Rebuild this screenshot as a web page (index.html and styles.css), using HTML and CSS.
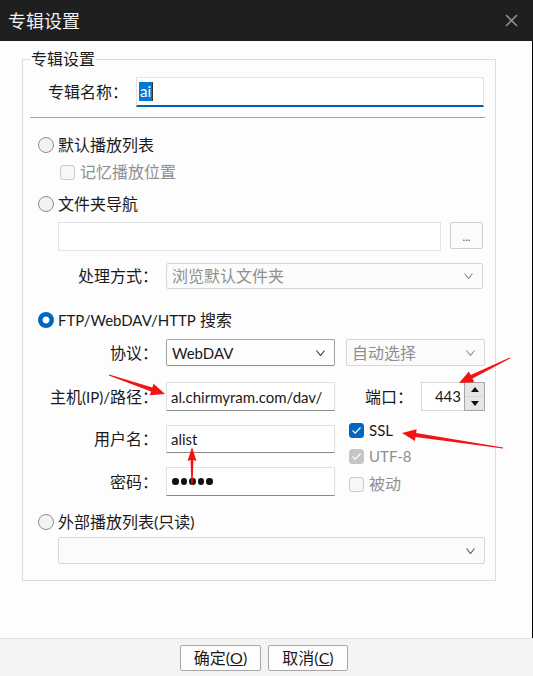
FILE: index.html
```html
<!DOCTYPE html>
<html lang="zh-CN">
<head>
<meta charset="utf-8">
<title>专辑设置</title>
<link rel="stylesheet" href="styles.css">
</head>
<body>
<div class="titlebar">
  <span class="title">专辑设置</span>
  <svg class="close" width="13" height="13" viewBox="0 0 13 13"><path d="M1 1L12 12M12 1L1 12" stroke="#8a8a8a" stroke-width="1.7" fill="none"/></svg>
</div>
<div class="main">
  <fieldset class="group">
    <legend>专辑设置</legend>

    <div class="name-row">
      <span class="lbl">专辑名称：</span>
      <div class="name-input"><span class="sel lt">ai</span><span class="caret"></span></div>
    </div>
    <div class="sep"></div>

    <div class="radio-row r1"><span class="radio"></span><span>默认播放列表</span></div>
    <div class="check-row c1 disabled"><span class="check"></span><span>记忆播放位置</span></div>

    <div class="radio-row r2"><span class="radio"></span><span>文件夹导航</span></div>
    <div class="path-row">
      <div class="path-input"></div>
      <div class="browse">...</div>
    </div>
    <div class="frow proc-row">
      <span class="lab">处理方式：</span>
      <div class="select dis w-proc"><span>浏览默认文件夹</span><svg class="chev" width="9" height="6" viewBox="0 0 9 6"><path d="M0.5 0.5L4.5 5.5L8.5 0.5" stroke="#8a8a8a" stroke-width="1.1" fill="none"/></svg></div>
    </div>

    <div class="radio-row r3"><span class="radio on"></span><span><span class="lt">FTP/WebDAV/HTTP</span> 搜索</span></div>
    <div class="frow proto-row">
      <span class="lab">协议：</span>
      <div class="select act w-proto"><span class="lt">WebDAV</span><svg class="chev" width="9" height="6" viewBox="0 0 9 6"><path d="M0.5 0.5L4.5 5.5L8.5 0.5" stroke="#333" stroke-width="1.1" fill="none"/></svg></div>
      <div class="select dis w-auto"><span>自动选择</span><svg class="chev" width="9" height="6" viewBox="0 0 9 6"><path d="M0.5 0.5L4.5 5.5L8.5 0.5" stroke="#8a8a8a" stroke-width="1.1" fill="none"/></svg></div>
    </div>
    <div class="frow host-row">
      <span class="lab">主机<span class="lt">(IP)/</span>路径：</span>
      <div class="tinput h29 lt">al.chirmyram.com/dav/</div>
      <span class="port-lab">端口：</span>
      <div class="spin">
        <div class="spin-input lt">443</div>
        <div class="spin-btns">
          <div class="sbtn"><svg width="8" height="5" viewBox="0 0 8 5"><path d="M0 5L4 0L8 5Z" fill="#111"/></svg></div>
          <div class="sbtn"><svg width="8" height="5" viewBox="0 0 8 5"><path d="M0 0L4 5L8 0Z" fill="#111"/></svg></div>
        </div>
      </div>
    </div>
    <div class="cred">
      <div class="cred-left">
        <div class="frow user-row">
          <span class="lab">用户名：</span>
          <div class="tinput h28 lt">alist</div>
        </div>
        <div class="frow pwd-row">
          <span class="lab">密码：</span>
          <div class="tinput h29 pwd"><i></i><i></i><i></i><i></i><i></i></div>
        </div>
      </div>
      <div class="cred-right">
        <div class="check-row ssl"><span class="check on"><svg width="11" height="9" viewBox="0 0 11 9"><path d="M1.5 4.5L4.2 7.2L9.5 1.5" stroke="#fff" stroke-width="1.2" fill="none"/></svg></span><span class="lt">SSL</span></div>
        <div class="check-row utf disabled"><span class="check on-dis"><svg width="11" height="9" viewBox="0 0 11 9"><path d="M1.5 4.5L4.2 7.2L9.5 1.5" stroke="#fff" stroke-width="1.2" fill="none"/></svg></span><span class="lt">UTF-8</span></div>
        <div class="check-row pasv disabled"><span class="check"></span><span>被动</span></div>
      </div>
    </div>

    <div class="radio-row r4"><span class="radio"></span><span>外部播放列表(只读)</span></div>
    <div class="select dis ext"><span></span><svg class="chev" width="9" height="6" viewBox="0 0 9 6"><path d="M0.5 0.5L4.5 5.5L8.5 0.5" stroke="#555" stroke-width="1.1" fill="none"/></svg></div>
  </fieldset>
</div>
<div class="footer">
  <button class="btn b-ok">确定(<u>O</u>)</button>
  <button class="btn b-cancel">取消(<u>C</u>)</button>
</div>

<svg class="arrows" width="533" height="676" viewBox="0 0 533 676">
  <polygon fill="#f21414" points="109.2,374.5 152.3,387.6 153.6,383.8 165,394 149.8,395.2 151.1,391.4 108.8,375.5"/>
  <polygon fill="#f21414" points="509.8,357.6 470.7,375.0 468.9,371.4 459,383 474.2,382.2 472.5,378.6 510.2,358.4"/>
  <polygon fill="#f21414" points="503.1,447.4 416.1,433.1 416.7,429.2 402,433 414.9,441.0 415.5,437.1 502.9,448.6"/>
  <polygon fill="#f21414" points="192,447 196.5,461 193.4,460 192.6,485 191.4,485 190.6,460 187.5,461"/>
</svg>
</body>
</html>
```

FILE: styles.css
```css
* { box-sizing: border-box; }
html, body { margin: 0; padding: 0; }
body {
  width: 533px;
  height: 676px;
  overflow: hidden;
  position: relative;
  background: #fdfdfd;
  font-family: "Lato", "Noto Sans CJK SC", sans-serif;
  font-size: 16px;
  line-height: 20px;
  color: #1a1a1a;
}
.lt { font-size: 15px; }

.titlebar {
  height: 41px;
  background: #1f1f1f;
  display: flex;
  align-items: center;
  justify-content: space-between;
  padding: 0 15px 0 8px;
}
.title { color: #f2f2f2; font-size: 18px; line-height: 24px; }

.main {
  height: 597px;
  padding: 8px 0 0 22px;
  border-right: 1px solid #000;
}
.group {
  width: 474px;
  margin: 0;
  padding: 0 0 16px 0;
  border: 1px solid #dcdcdc;
  min-inline-size: 0;
}
.group legend {
  margin-left: 7px;
  padding: 0 1px;
  font-size: 16px;
  line-height: 20px;
}

.name-row {
  display: flex;
  align-items: center;
  gap: 8px;
  margin-top: 8px;
  padding-left: 25px;
}
.lbl { white-space: nowrap; }
.name-input {
  width: 348px;
  height: 30px;
  background: #fff;
  border: 1px solid #e3e3e3;
  border-bottom: 2px solid #005fb8;
  padding-left: 2px;
  display: flex;
  align-items: center;
}
.sel { background: #0078d7; color: #fff; line-height: 19px; padding: 0 1px; }
.caret { width: 1px; height: 19px; background: #333; }

.sep {
  margin: 10px 0 0 7px;
  width: 455px;
  height: 1px;
  background: #a3a3a3;
}

.radio-row {
  display: flex;
  align-items: center;
  gap: 4px;
  height: 20px;
  padding-left: 15px;
}
.r1 { margin-top: 17px; }
.r2 { margin-top: 12px; }
.r3 { margin-top: 21px; }
.r4 { margin-top: 16px; }
.radio {
  flex: none;
  width: 16px;
  height: 16px;
  border-radius: 50%;
  border: 1px solid #8d8d8d;
  background: #f2f2f2;
}
.radio.on {
  border: none;
  background: radial-gradient(circle, #fff 0 3.2px, #0067c0 3.8px);
}

.check-row {
  display: flex;
  align-items: center;
  gap: 5px;
  height: 20px;
}
.c1 { margin-top: 7px; padding-left: 37px; }
.check {
  flex: none;
  width: 15px;
  height: 15px;
  border-radius: 3px;
  border: 1px solid #cacaca;
  background: #f7f7f7;
  display: flex;
  align-items: center;
  justify-content: center;
}
.check.on { background: #0067c0; border-color: #0067c0; }
.check.on-dis { background: #c6c6c6; border-color: #c6c6c6; }
.disabled { color: #8f8f8f; }

.path-row {
  display: flex;
  align-items: flex-start;
  gap: 9px;
  margin: 8px 0 0 35px;
}
.path-input {
  width: 383px;
  height: 29px;
  background: #fff;
  border: 1px solid #e3e3e3;
}
.browse {
  width: 33px;
  height: 27px;
  border: 1px solid #cfcfcf;
  border-radius: 2px;
  background: #fbfbfb;
  color: #555;
  font-size: 11px;
  line-height: 11px;
  display: flex;
  align-items: flex-end;
  justify-content: center;
  padding-bottom: 6px;
}

.frow { display: flex; align-items: center; }
.lab {
  flex: none;
  width: 135px;
  margin-right: 8px;
  text-align: right;
  white-space: nowrap;
}
.proc-row { margin-top: 12px; }
.proto-row { margin-top: 9px; }
.host-row { margin-top: 16px; }

.select {
  height: 26px;
  display: flex;
  align-items: center;
  justify-content: space-between;
  padding: 0 9px 0 5px;
  border-radius: 2px;
}
.select.dis { border: 1px solid #d6d6d6; background: #fbfbfb; color: #8f8f8f; }
.select.act { border: 1px solid #a3a3a3; border-bottom-color: #8a8a8a; background: #fdfdfd; color: #1a1a1a; }
.w-proc { width: 317px; }
.w-proto { width: 169px; height: 27px; }
.w-auto { width: 139px; height: 27px; margin-left: 11px; }
.ext { width: 427px; height: 27px; margin: 5px 0 0 35px; }

.tinput {
  width: 169px;
  background: #fff;
  border: 1px solid #e0e0e0;
  border-bottom-color: #8a8a8a;
  padding-left: 4px;
  display: flex;
  align-items: center;
  white-space: nowrap;
  overflow: hidden;
}
.h28 { height: 28px; }
.h29 { height: 29px; }

.port-lab {
  flex: none;
  width: 86px;
  padding-right: 8px;
  text-align: right;
}
.spin { display: flex; height: 29px; }
.spin-input {
  width: 43px;
  height: 29px;
  background: #fff;
  border: 1px solid #d9d9d9;
  border-right: none;
  text-align: right;
  padding-right: 3px;
  line-height: 27px;
}
.spin-btns {
  width: 21px;
  height: 29px;
  border: 1px solid #a6a6a6;
  background: #d9d9d9;
  display: flex;
  flex-direction: column;
  gap: 1px;
}
.sbtn {
  flex: 1;
  background: #e6e6e6;
  display: flex;
  align-items: center;
  justify-content: center;
}

.cred { display: flex; }
.cred-left { width: 312px; }
.cred-right { padding: 9px 0 0 14px; }
.user-row { margin-top: 14px; }
.pwd-row { margin-top: 14px; }
.pwd { padding-left: 5px; gap: 2px; }
.pwd i {
  width: 6.5px;
  height: 6.5px;
  border-radius: 50%;
  background: #111;
}
.utf { margin-top: 6px; }
.pasv { margin-top: 8px; }

.footer {
  height: 38px;
  background: #f3f3f3;
  border-top: 1px solid #e2e2e2;
  display: flex;
  justify-content: center;
  gap: 7px;
  padding: 6px 5px 0 0;
}
.btn {
  height: 26px;
  padding: 0;
  border: 1px solid #a8a8a8;
  border-radius: 2px;
  background: #fdfdfd;
  font-family: inherit;
  font-size: 16px;
  line-height: 20px;
  color: #1a1a1a;
}
.b-ok { width: 81px; }
.b-cancel { width: 80px; }

.arrows {
  position: absolute;
  left: 0;
  top: 0;
  pointer-events: none;
}
```
